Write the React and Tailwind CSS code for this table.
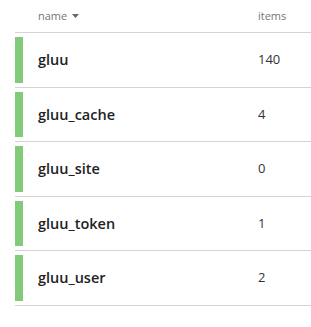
import React from 'react';

const rows = [
    { name: 'gluu', items: 140 },
    { name: 'gluu_cache', items: 4 },
    { name: 'gluu_site', items: 0 },
    { name: 'gluu_token', items: 1 },
    { name: 'gluu_user', items: 2 },
];

export default function App() {
    return (
        <div className="w-[311px] h-[327px] bg-white pl-[15px]" style={{ fontFamily: '"Open Sans", sans-serif' }}>
            <div className="flex items-center h-[33px] border-b border-[#d4d4d4] text-[11px] text-[#757575]">
                <div className="pl-[23px] w-[243px] flex items-center gap-[5px]">
                    <span>name</span>
                    <svg width="7" height="4" viewBox="0 0 7 4"><path d="M0 0h7L3.5 4z" fill="#666" /></svg>
                </div>
                <div>items</div>
            </div>
            {rows.map(r => (
                <div key={r.name} className="flex items-stretch h-[54.6px] border-b border-[#d4d4d4] py-[4px]">
                    <div className="w-2 bg-[#80ca7a]" />
                    <div className="flex items-center w-[235px] pl-[15px] text-[14.5px] font-semibold text-[#222]">{r.name}</div>
                    <div className="flex items-center text-[13px] text-[#333]">{r.items}</div>
                </div>
            ))}
        </div>
    );
}
